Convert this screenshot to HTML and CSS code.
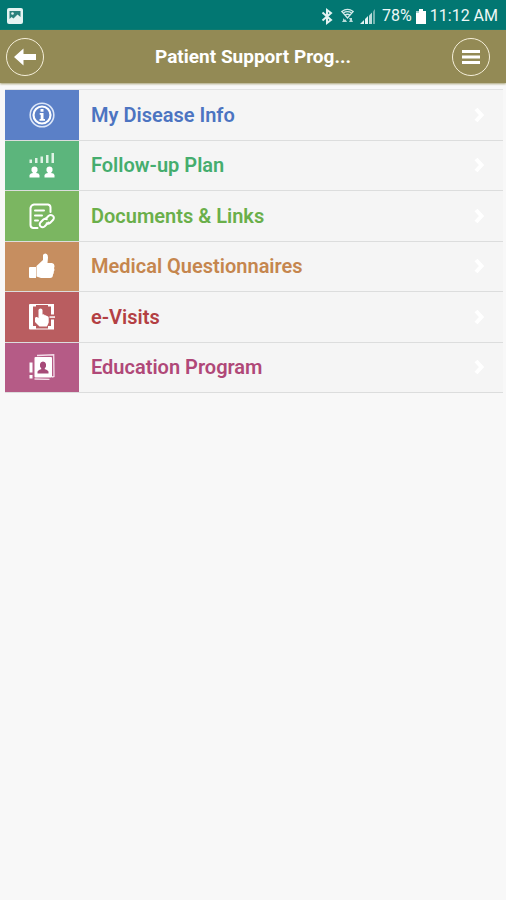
FILE: index.html
```html
<!DOCTYPE html>
<html lang="en">
<head>
<meta charset="utf-8">
<meta name="viewport" content="width=device-width, initial-scale=1">
<title>Patient Support Program</title>
<link rel="stylesheet" href="styles.css">
</head>
<body>
<div class="status">
  <svg class="status-photo" width="16" height="16" viewBox="0 0 16 16" aria-hidden="true"><rect width="16" height="16" rx="2" fill="#e4f3f2"/><path d="M2.500 3h11v6l-3-2.500-4 4-2-1.500-2 2z" fill="#2a817d"/><circle cx="5.500" cy="5.500" r="1.300" fill="#e4f3f2"/></svg>
  <div class="status-right">
    <svg width="12" height="17" viewBox="0 0 12 17" fill="none" stroke="#e4f3f2" stroke-width="2" aria-hidden="true"><path d="M1.500 4.500 10 12l-4 3v-13L10 5l-8.500 7.500"/></svg>
    <svg class="wifi" width="13" height="16" viewBox="0 0 13 16" fill="none" stroke="#d5ebea" aria-hidden="true"><path d="M.8 3.500Q6.500-.8 12.200 3.500L6.500 10z" stroke-width="1.300"/><path d="M2.500 4.800q4-2.500 8 0M4 7q2.500-1.500 5 0" stroke-width="1.300"/><path d="m2 10 1 1.500h1.500L6 14H1l1-1.500zm6 0h3v2l1 2H8l1-2z" fill="#b9dcda" stroke="none"/></svg>
    <svg class="signal" width="16" height="15" viewBox="0 0 16 15" aria-hidden="true"><path d="M0 15h4v-4zM5 15h3V7L5 10z" fill="#e4f3f2"/><path d="M9 15h3V3.500L9 6.500z" fill="#b9dcda"/><path d="M13 15h2V0l-2 2.500z" fill="#74b4b0"/></svg>
    <span class="battery-text">78%</span>
    <svg class="battery" width="10" height="15" viewBox="0 0 10 15" aria-hidden="true"><path d="M3 0h4v2h3v13H0V2h3z" fill="#fff"/><path d="M0 2h3v2H0z" fill="#a5d0ce"/></svg>
    <span>11:12 AM</span>
  </div>
</div>
<header class="bar">
  <button class="round" type="button" aria-label="Back"><svg width="24" height="18" viewBox="0 0 24 18" aria-hidden="true"><path d="M1 9 10.500 .5V6H23v6H10.500v5.500z" fill="#fff"/></svg></button>
  <h1>Patient Support Prog...</h1>
  <button class="round menu" type="button" aria-label="Menu"><svg width="18" height="14" viewBox="0 0 18 14" aria-hidden="true"><path d="M0 0h18v3H0zM0 5.500h18v3H0zM0 11h18v3H0z" fill="#fff"/></svg></button>
</header>
<main>
<nav class="list" aria-label="Program sections">
  <a class="row blue" href="#disease"><span class="tile"><svg viewBox="0 0 26 26" aria-hidden="true"><circle cx="13" cy="13" r="11.800" fill="none" stroke="#dce6f8" stroke-width="1.600"/><circle cx="13" cy="13" r="8.500" fill="none" stroke="#fff" stroke-width="2.200"/><path d="M11.500 7h3v2.700h-3zM10.700 11h3.800v6H16v1.700h-5.500V17h1.200v-4.300h-1z" fill="#fff"/></svg></span><span class="label">My Disease Info</span><svg class="chevron" viewBox="0 0 10 16" aria-hidden="true"><path d="m2 2 5.500 6L2 14"/></svg></a>
  <a class="row green" href="#follow-up"><span class="tile"><svg viewBox="0 0 26 26" aria-hidden="true"><path d="M.5 7.500H3V11H.5zM6 6h2.500v5H6zM11.500 4.500H14V11h-2.500zM17 3h2.500v8H17zM22.500 1H25v10h-2.500z" fill="#dff3e5"/><g fill="#fff"><path d="M.500 25.500V23q1-2 3.500-2l-1.500-2v-2.500Q3 14.500 5.500 14.500t3 2V19L7 21q3 0 3.500 2v2.500z"/><path d="M15.500 25.500V23q1-2 3.500-2l-1.500-2v-2.500q.5-2 3-2t3 2V19L22 21q3 0 3.500 2v2.500z"/></g></svg></span><span class="label">Follow-up Plan</span><svg class="chevron" viewBox="0 0 10 16" aria-hidden="true"><path d="m2 2 5.500 6L2 14"/></svg></a>
  <a class="row lime" href="#documents"><span class="tile"><svg viewBox="0 0 26 26" fill="none" stroke="#fff" stroke-width="2" stroke-linecap="round" stroke-linejoin="round" aria-hidden="true"><path d="M8.500 25H4q-2.500-.5-2.500-3V5Q2 2 5 1.500h14q2.500.5 2.500 3V9M6 7.500h9M6 12.500h7M6 17.500h3"/><path d="m16.500 16 3.200-3.200q2-1.500 4 0t.5 4L21 20q-1.500 1.200-3.300.3M19.500 19.500l-4 4q-2 1.500-3.800 0t-.3-4l3-3q1.600-1.200 3.300-.3"/></svg></span><span class="label">Documents &amp; Links</span><svg class="chevron" viewBox="0 0 10 16" aria-hidden="true"><path d="m2 2 5.500 6L2 14"/></svg></a>
  <a class="row orange" href="#questionnaires"><span class="tile"><svg viewBox="0 0 26 26" fill="#fff" aria-hidden="true"><path d="M1 14h6v11H1q-1 0-1-1v-9q0-1 1-1zM7.500 13l6.500-6V2q.5-1.500 2.500-1.500Q19 1 19 4.500L18.500 10H23q2.500.5 2.500 3 0 1.500-.5 2 1 2-.2 3.500.2 2-.8 3 0 3.500-3 3.500h-9l-4.500-1.500z"/></svg></span><span class="label">Medical Questionnaires</span><svg class="chevron" viewBox="0 0 10 16" aria-hidden="true"><path d="m2 2 5.500 6L2 14"/></svg></a>
  <a class="row red" href="#visits"><span class="tile"><svg viewBox="0 0 26 26" fill="#fff" aria-hidden="true"><path d="M1 0h6v2.500H4V22h3v3.500H1q-1 0-1-1V1q0-1 1-1zM7 0h12v1H7zM19 0h6v10.500h-3v-8h-3zM22 15.500h3v10h-6V22h3zM7 24.500h12v1H7z"/><path d="M9.500 14V6q.2-1.500 2-1.500t2 1.500v4.500q1.700-.5 2.200.8 1.600-.5 2 .7 1.800-.2 2 1.500v5L18 22.500h-7.500L6 18v-4q.5-1.500 2-1z"/><path d="M20.500 12.300H26v1.500h-5.500z"/></svg></span><span class="label">e-Visits</span><svg class="chevron" viewBox="0 0 10 16" aria-hidden="true"><path d="m2 2 5.500 6L2 14"/></svg></a>
  <a class="row pink" href="#education"><span class="tile"><svg viewBox="0 0 26 26" aria-hidden="true"><path d="M.5 8.500H3.500v10h-3zM.5 21h3v3.500h-3z" fill="#fff"/><path d="M8 1.500 24.700.8 25 22.500l-2 .5M5.500 25l15 .5" fill="none" stroke="#f4dce9" stroke-width="1.300"/><rect x="5.500" y="3" width="17.500" height="20.500" rx="1" fill="#fff"/><path d="M8.500 19.500v-2q1-2 4-2.500L11 12.500V10q.5-2.500 3-2.500t3 2.500v2.500L15.500 15q3 .5 4 2.500v2z" fill="#a64a78"/></svg></span><span class="label">Education Program</span><svg class="chevron" viewBox="0 0 10 16" aria-hidden="true"><path d="m2 2 5.500 6L2 14"/></svg></a>
</nav>
</main>
</body>
</html>
```
FILE: styles.css
```css
* { box-sizing: border-box; }
body {
  margin: 0;
  min-height: 100vh;
  background: #f8f8f8;
  font-family: Roboto, "Liberation Sans", sans-serif;
}
.status {
  display: flex;
  align-items: center;
  justify-content: space-between;
  height: 30px;
  padding: 2px 8px 0 7px;
  background: #027772;
  color: #eef8f7;
  font-size: 16px;
  line-height: 28px;
}
.status-right { display: flex; align-items: center; gap: 4px; }
.wifi { margin-left: 4px; }
.signal { margin-left: 2px; }
.battery-text { margin-left: 2px; }
.bar {
  display: grid;
  grid-template-columns: 1fr auto 1fr;
  align-items: center;
  height: 53px;
  padding: 0 6px;
  background: #938a55;
  box-shadow: 0 1px 2px #a8a276;
}
.bar h1 {
  margin: 0;
  color: #fff;
  font-size: 19px;
  font-weight: 700;
  line-height: 24px;
}
.round {
  display: flex;
  align-items: center;
  justify-content: center;
  width: 38px;
  height: 38px;
  padding: 0;
  border: 1px solid #f5efd9;
  border-radius: 50%;
  background: transparent;
}
.menu { justify-self: end; margin-right: 10px; }
main { padding: 6px 3px 0 5px; }
.list {
  display: grid;
  grid-auto-rows: 1fr;
  min-height: 304px;
  border-top: 1px solid #e2e3e3;
}
.row {
  display: flex;
  align-items: center;
  padding-right: 19px;
  border-bottom: 1px solid #dcdddd;
  background: #f5f5f5;
  font-size: 20px;
  font-weight: 600;
  line-height: 24px;
  text-decoration: none;
}
.tile {
  display: flex;
  align-items: center;
  justify-content: center;
  align-self: stretch;
  width: 74px;
  margin-right: 12px;
}
.tile svg { width: 26px; height: 26px; }
.label { flex: 1; }
.chevron {
  width: 10px;
  height: 16px;
  fill: none;
  stroke: #fff;
  stroke-width: 4;
}
.blue { color: #4c74c1; }
.blue .tile { background: #5b80c7; }
.green { color: #45ad6e; }
.green .tile { background: #5cb57c; }
.lime { color: #6aaf4a; }
.lime .tile { background: #7bb661; }
.orange { color: #c5864e; }
.orange .tile { background: #c68e60; }
.red { color: #b33f43; }
.red .tile { background: #b95d60; }
.pink { color: #b04878; }
.pink .tile { background: #b55b86; }
```
